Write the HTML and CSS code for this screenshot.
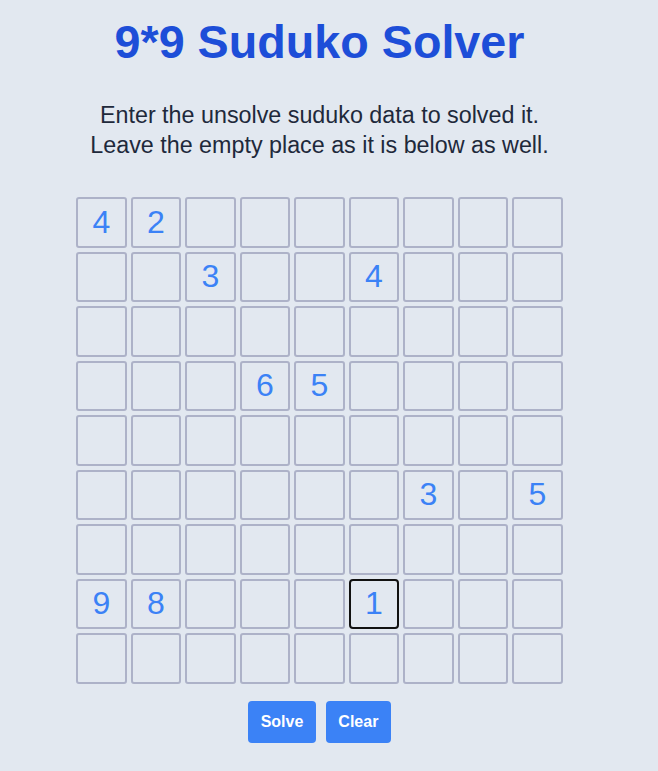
FILE: index.html
```html
<!DOCTYPE html>
<html>
<head>
<meta charset="utf-8">
<link rel="stylesheet" href="styles.css">
</head>
<body>
<main class="page">
  <h1 class="title">9*9 Suduko Solver</h1>
  <p class="intro">Enter the unsolve suduko data to solved it.<br>Leave the empty place as it is below as well.</p>
  <div class="board">
    <div class="cell">4</div><div class="cell">2</div><div class="cell"></div><div class="cell"></div><div class="cell"></div><div class="cell"></div><div class="cell"></div><div class="cell"></div><div class="cell"></div>
    <div class="cell"></div><div class="cell"></div><div class="cell">3</div><div class="cell"></div><div class="cell"></div><div class="cell">4</div><div class="cell"></div><div class="cell"></div><div class="cell"></div>
    <div class="cell"></div><div class="cell"></div><div class="cell"></div><div class="cell"></div><div class="cell"></div><div class="cell"></div><div class="cell"></div><div class="cell"></div><div class="cell"></div>
    <div class="cell"></div><div class="cell"></div><div class="cell"></div><div class="cell">6</div><div class="cell">5</div><div class="cell"></div><div class="cell"></div><div class="cell"></div><div class="cell"></div>
    <div class="cell"></div><div class="cell"></div><div class="cell"></div><div class="cell"></div><div class="cell"></div><div class="cell"></div><div class="cell"></div><div class="cell"></div><div class="cell"></div>
    <div class="cell"></div><div class="cell"></div><div class="cell"></div><div class="cell"></div><div class="cell"></div><div class="cell"></div><div class="cell">3</div><div class="cell"></div><div class="cell">5</div>
    <div class="cell"></div><div class="cell"></div><div class="cell"></div><div class="cell"></div><div class="cell"></div><div class="cell"></div><div class="cell"></div><div class="cell"></div><div class="cell"></div>
    <div class="cell">9</div><div class="cell">8</div><div class="cell"></div><div class="cell"></div><div class="cell"></div><div class="cell focused">1</div><div class="cell"></div><div class="cell"></div><div class="cell"></div>
    <div class="cell"></div><div class="cell"></div><div class="cell"></div><div class="cell"></div><div class="cell"></div><div class="cell"></div><div class="cell"></div><div class="cell"></div><div class="cell"></div>
  </div>
  <div class="actions">
    <button class="btn btn-solve">Solve</button>
    <button class="btn btn-clear">Clear</button>
  </div>
</main>
</body>
</html>
```
FILE: styles.css
```css
html, body {
  margin: 0;
  padding: 0;
  background: #e2e8f0;
  font-family: "Liberation Sans", Arial, sans-serif;
}
.page {
  width: 639px;
  height: 771px;
  display: flex;
  flex-direction: column;
  align-items: center;
  text-align: center;
}
.title {
  margin: 18px 0 0;
  font-size: 46.7px;
  line-height: 48px;
  font-weight: 700;
  color: #1d4ed8;
}
.intro {
  margin: 34px 0 0;
  font-size: 23.3px;
  line-height: 30px;
  color: #1e293b;
}
.board {
  margin-top: 37px;
  display: grid;
  grid-template-columns: repeat(9, 50.5px);
  grid-auto-rows: 50.5px;
  gap: 4px;
}
.cell {
  box-sizing: border-box;
  border: 2px solid #adb2c8;
  border-radius: 3px;
  display: flex;
  align-items: center;
  justify-content: center;
  font-size: 32px;
  color: #3b82f6;
}
.cell.focused {
  border-color: #111111;
  border-radius: 4px;
}
.actions {
  margin-top: 17px;
  display: flex;
  gap: 10px;
}
.btn {
  height: 42px;
  padding: 0 12.5px;
  border: none;
  border-radius: 4px;
  background: #3b82f6;
  color: #ffffff;
  font-family: "Liberation Sans", Arial, sans-serif;
  font-size: 16px;
  font-weight: 700;
}
```
